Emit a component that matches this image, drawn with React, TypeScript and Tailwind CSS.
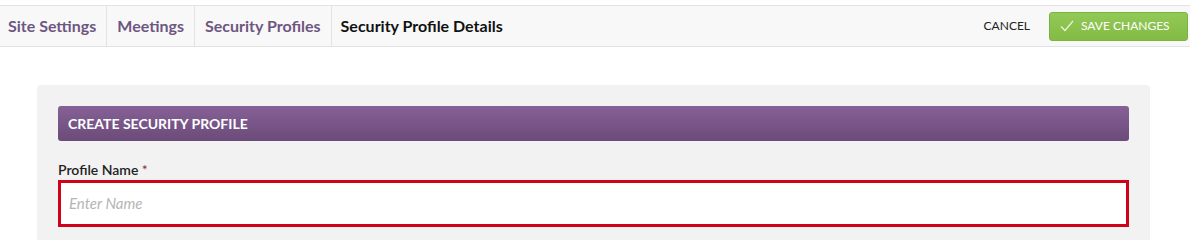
export default function App() {
  return (
    <div className="h-[240px] w-[1190px] bg-white overflow-hidden font-['Lato',sans-serif]">
      <div className="h-[5px]" />
      <header className="h-[42px] flex items-stretch justify-between border-y border-[#e3e3e3] bg-[#f8f8f8]">
        <nav className="flex items-stretch text-[16px] font-bold">
          <a className="flex items-center pl-[8px] pr-[10px] border-r border-[#e3e3e3] text-[#6e5682]">Site Settings</a>
          <a className="flex items-center px-[10px] border-r border-[#e3e3e3] text-[#6e5682]">Meetings</a>
          <a className="flex items-center px-[10px] border-r border-[#e3e3e3] text-[#6e5682]">Security Profiles</a>
          <span className="flex items-center px-[9px] text-[#111]">Security Profile Details</span>
        </nav>
        <div className="flex items-center pr-[2px]">
          <button className="text-[12px] text-[#222] mr-[19px]">CANCEL</button>
          <button className="h-[29px] w-[139px] flex items-center gap-[7px] pl-[10px] rounded-[3px] bg-gradient-to-b from-[#93c957] to-[#83bb45] border border-[#7cb23f] text-white text-[12px]">
            <svg width="14" height="12" viewBox="0 0 14 12" fill="none" stroke="#e8f5d8" strokeWidth="1.2">
              <path d="M1 6.5 L5 10.5 L13 1" />
            </svg>
            SAVE CHANGES
          </button>
        </div>
      </header>
      <div className="pt-[38px] pl-[37px]">
        <div className="w-[1113px] h-[200px] bg-[#f2f2f2] rounded-t-[4px] pt-[21px] px-[21px]">
          <div className="h-[35px] rounded-[3px] bg-gradient-to-b from-[#866196] to-[#6b4b7a] flex items-center pl-[10px]">
            <span className="text-white font-bold text-[14px]">CREATE SECURITY PROFILE</span>
          </div>
          <div className="mt-[20px] text-[14px] font-semibold text-[#222] leading-[18px]">
            Profile Name <span className="text-[#8b2b3a] font-normal">*</span>
          </div>
          <div className="mt-[1px] h-[47px] border-[3px] border-[#d0021b] bg-white flex items-center pl-[8px]">
            <span className="italic text-[15px] text-[#b5b5b5]">Enter Name</span>
          </div>
        </div>
      </div>
    </div>
  );
}
